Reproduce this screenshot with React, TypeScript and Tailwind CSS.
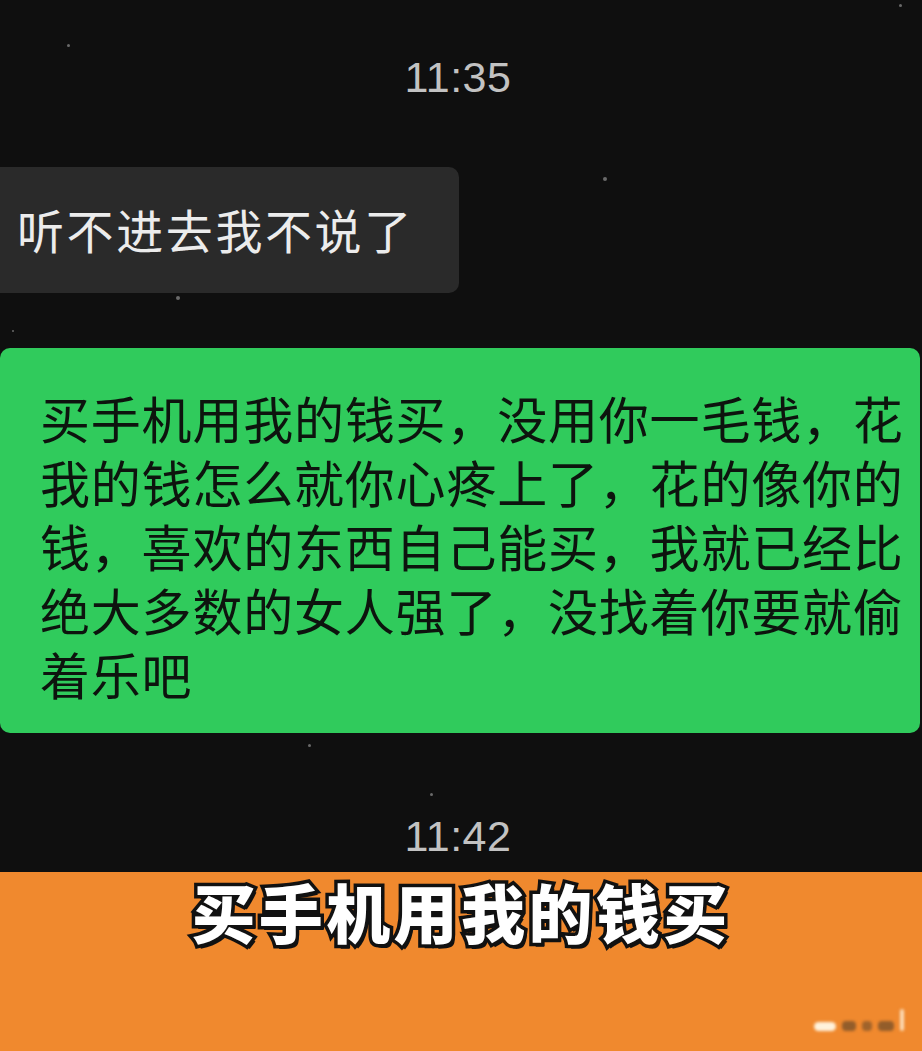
const cjk = "font-['Noto_Sans_CJK_SC','Noto_Sans',sans-serif]";

const greenLines = [
  "买手机用我的钱买，没用你一毛钱，花",
  "我的钱怎么就你心疼上了，花的像你的",
  "钱，喜欢的东西自己能买，我就已经比",
  "绝大多数的女人强了，没找着你要就偷",
  "着乐吧",
];

const dots = [
  { x: 67, y: 44, s: 3 },
  { x: 603, y: 177, s: 4 },
  { x: 176, y: 296, s: 4 },
  { x: 308, y: 744, s: 3 },
  { x: 430, y: 793, s: 3 },
  { x: 899, y: 4, s: 3 },
  { x: 12, y: 330, s: 2 },
];

function Stamp({ time, className }: { time: string; className: string }) {
  return (
    <div
      className={`text-center pr-[6px] text-[43px] leading-[50px] tracking-[0.5px] text-[#c2c2c2] font-['Liberation_Sans',Arial,sans-serif] ${className}`}
    >
      {time}
    </div>
  );
}

export default function App() {
  return (
    <div className="relative w-[922px] h-[1051px] overflow-hidden bg-[#0f0f0f] flex flex-col">
      {dots.map((d, i) => (
        <span
          key={i}
          className="absolute rounded-full bg-[#6a6a6a]"
          style={{ left: d.x, top: d.y, width: d.s, height: d.s }}
        />
      ))}

      <Stamp time="11:35" className="h-[167px] pt-[52px]" />

      <div className="w-[459px] h-[126px] rounded-r-[10px] bg-[#2a2a2a] flex items-center pl-[17px]">
        <span
          className={`${cjk} text-[47px] leading-none tracking-[2.6px] text-[#ececec] -mt-[4px]`}
        >
          听不进去我不说了
        </span>
      </div>

      <div
        className={`mt-[55px] w-[920px] h-[385px] rounded-[10px] bg-[#30cb5c] pl-[40px] pt-[37px] ${cjk} text-[50px] leading-[64px] tracking-[0.8px] text-[#0d140e]`}
      >
        {greenLines.map((l) => (
          <div key={l} className="whitespace-nowrap">
            {l}
          </div>
        ))}
      </div>

      <Stamp time="11:42" className="h-[139px] pt-[78px]" />

      <div className="relative flex-1 bg-[#f0892e] pt-[6px]">
        <div
          className={`${cjk} text-center text-[64px] leading-[64px] font-black tracking-[3.4px] text-white [-webkit-text-stroke:7px_#111] [paint-order:stroke_fill] [text-shadow:3px_4px_0_#111]`}
        >
          买手机用我的钱买
        </div>
        <div className="absolute right-[18px] bottom-[20px] flex items-end gap-[6px] blur-[1.5px]">
          <span className="w-[22px] h-[9px] rounded-full bg-[#fff2dc]" />
          <span className="w-[14px] h-[10px] rounded-sm bg-[#6b4a2a] opacity-70" />
          <span className="w-[10px] h-[10px] rounded-sm bg-[#6b4a2a] opacity-60" />
          <span className="w-[16px] h-[10px] rounded-sm bg-[#6b4a2a] opacity-70" />
          <span className="w-[4px] h-[22px] rounded-sm bg-[#fff2dc] opacity-80" />
        </div>
      </div>
    </div>
  );
}
